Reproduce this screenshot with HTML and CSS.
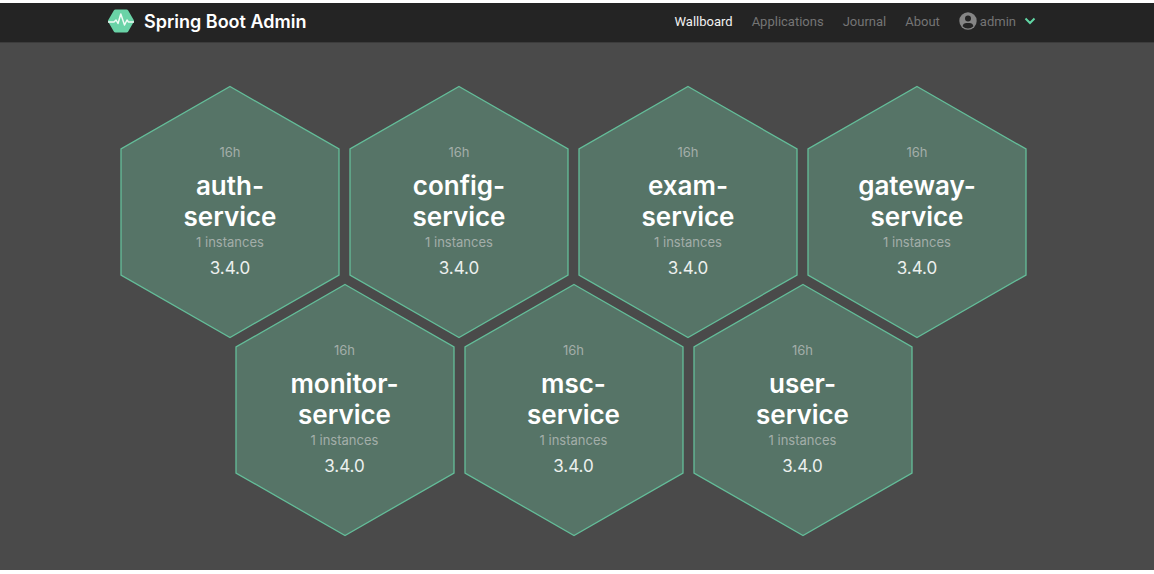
FILE: index.html
```html
<!DOCTYPE html>
<html lang="en">
<head>
<meta charset="utf-8">
<meta name="viewport" content="width=device-width, initial-scale=1">
<title>Spring Boot Admin</title>
<link rel="stylesheet" href="styles.css">
</head>
<body>
<header class="navbar">
  <div class="navbar-inner">
    <a class="brand" href="#">
      <svg class="logo" viewBox="0 0 26 24" aria-hidden="true">
        <path d="M7.500 .5h11a2 2 0 0 1 1.700 1l5.500 9.500a2 2 0 0 1 0 2l-5.500 9.500a2 2 0 0 1-1.700 1h-11a2 2 0 0 1-1.700-1L.3 13a2 2 0 0 1 0-2l5.500-9.500a2 2 0 0 1 1.700-1z" fill="#6ad3a7"/>
        <path d="M0 13h6l2-2 2 3.500 2.800-9.500 3.700 11 2.500-5 1.500 2H26" fill="none" stroke="#effbf5" stroke-width="1.500" stroke-linejoin="round"/>
      </svg>
      <span>Spring Boot Admin</span>
    </a>
    <nav class="menu">
      <a class="active" href="#">Wallboard</a>
      <a href="#">Applications</a>
      <a href="#">Journal</a>
      <a href="#">About</a>
      <button class="user" type="button">
        <svg class="avatar" viewBox="0 0 18 18" aria-hidden="true">
          <circle cx="9" cy="9" r="8.700" fill="#858585"/>
          <circle cx="9" cy="6.600" r="3" fill="#242424"/>
          <path d="M3.600 14.200c.4-2 2-3.200 3.800-3.200h3.200c1.800 0 3.400 1.200 3.800 3.200a7.500 7.500 0 0 1-10.800 0z" fill="#242424"/>
        </svg>
        <span>admin</span>
        <svg class="chevron" viewBox="0 0 12 8" aria-hidden="true"><path d="M1.500 1.500 6 6l4.500-4.500" fill="none" stroke="#61d5a4" stroke-width="2"/></svg>
      </button>
    </nav>
  </div>
</header>
<main class="wallboard">
  <div class="row">
    <a class="tile" href="#"><svg class="hex" viewBox="0 0 220 254" aria-hidden="true"><path d="M110 1.500 219 64v126L110 252.500 1 190V64z"/></svg><span class="muted">16h</span><h2>auth-<br>service</h2><span class="muted">1 instances</span><span class="version">3.4.0</span></a>
    <a class="tile" href="#"><svg class="hex" viewBox="0 0 220 254" aria-hidden="true"><path d="M110 1.500 219 64v126L110 252.500 1 190V64z"/></svg><span class="muted">16h</span><h2>config-<br>service</h2><span class="muted">1 instances</span><span class="version">3.4.0</span></a>
    <a class="tile" href="#"><svg class="hex" viewBox="0 0 220 254" aria-hidden="true"><path d="M110 1.500 219 64v126L110 252.500 1 190V64z"/></svg><span class="muted">16h</span><h2>exam-<br>service</h2><span class="muted">1 instances</span><span class="version">3.4.0</span></a>
    <a class="tile" href="#"><svg class="hex" viewBox="0 0 220 254" aria-hidden="true"><path d="M110 1.500 219 64v126L110 252.500 1 190V64z"/></svg><span class="muted">16h</span><h2>gateway-<br>service</h2><span class="muted">1 instances</span><span class="version">3.4.0</span></a>
  </div>
  <div class="row">
    <a class="tile" href="#"><svg class="hex" viewBox="0 0 220 254" aria-hidden="true"><path d="M110 1.500 219 64v126L110 252.500 1 190V64z"/></svg><span class="muted">16h</span><h2>monitor-<br>service</h2><span class="muted">1 instances</span><span class="version">3.4.0</span></a>
    <a class="tile" href="#"><svg class="hex" viewBox="0 0 220 254" aria-hidden="true"><path d="M110 1.500 219 64v126L110 252.500 1 190V64z"/></svg><span class="muted">16h</span><h2>msc-<br>service</h2><span class="muted">1 instances</span><span class="version">3.4.0</span></a>
    <a class="tile" href="#"><svg class="hex" viewBox="0 0 220 254" aria-hidden="true"><path d="M110 1.500 219 64v126L110 252.500 1 190V64z"/></svg><span class="muted">16h</span><h2>user-<br>service</h2><span class="muted">1 instances</span><span class="version">3.4.0</span></a>
  </div>
</main>
</body>
</html>
```
FILE: styles.css
```css
* {
  box-sizing: border-box;
}

body {
  margin: 0;
  min-height: 100vh;
  display: flex;
  flex-direction: column;
  border-top: 3px solid #fff;
  border-bottom: 4px solid #fff;
  background: #fff;
  font-family: Inter, "Liberation Sans", sans-serif;
}

a {
  color: inherit;
  text-decoration: none;
}

.navbar {
  background: #242424;
  border-bottom: 1px solid #3c3c3c;
}

.navbar-inner {
  display: flex;
  align-items: center;
  justify-content: space-between;
  max-width: 944px;
  height: 39px;
  margin: 0 auto;
  padding: 0 13px 3px 3px;
}

.brand {
  display: flex;
  align-items: center;
  gap: 10px;
  color: #fff;
  font-size: 18px;
  font-weight: 600;
}

.logo {
  width: 26px;
  height: 24px;
}

.menu {
  display: flex;
  align-items: center;
  gap: 19px;
  color: #757575;
  font-family: Roboto, "Liberation Sans", sans-serif;
  font-size: 13px;
}

.menu .active {
  color: #f2f2f2;
}

.user {
  display: flex;
  align-items: center;
  gap: 3px;
  padding: 0;
  border: 0;
  background: none;
  color: #757575;
  font: inherit;
}

.avatar {
  width: 18px;
  height: 18px;
}

.chevron {
  width: 12px;
  height: 8px;
  margin-left: 5px;
}

.wallboard {
  flex: 1;
  padding: 42px 0 33px;
  background: #4a4a4a;
}

.row {
  display: flex;
  justify-content: center;
  gap: 9px;
  padding-right: 7px;
}

.row + .row {
  margin-top: -56px;
}

.tile {
  position: relative;
  display: flex;
  flex-direction: column;
  align-items: center;
  justify-content: center;
  width: 220px;
  height: 254px;
  padding-bottom: 3px;
  color: #fff;
  text-align: center;
}

.hex {
  position: absolute;
  inset: 0;
  fill: #567467;
  stroke: #64bd99;
  stroke-width: 1.300;
}

.tile > :not(.hex) {
  position: relative;
}

.muted {
  color: #a3aea9;
  font-size: 13px;
  line-height: 20px;
}

.tile h2 {
  margin: 8px 0 0;
  font-size: 26px;
  font-weight: 600;
  line-height: 31px;
}

.version {
  margin-top: 4px;
  color: #ecf0ee;
  font-size: 17px;
  line-height: 24px;
}
```
